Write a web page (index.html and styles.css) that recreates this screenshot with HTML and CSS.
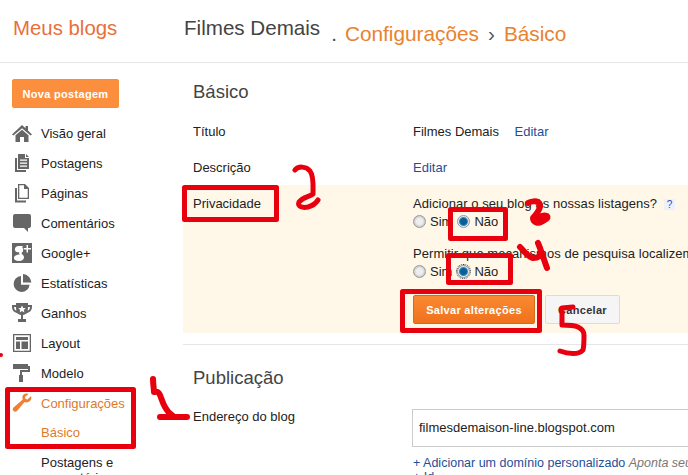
FILE: index.html
```html
<!DOCTYPE html>
<html lang="pt">
<head>
  <meta charset="UTF-8">
  <title>Filmes Demais - Configurações</title>
  <link rel="stylesheet" href="styles.css">
</head>
<body>
  <div class="page">
    <header class="top-bar">
      <div class="brand">Meus blogs</div>
      <div class="crumbs">
        <span class="blog-name">Filmes Demais</span>
        <span class="dot">.</span>
        <span class="crumb">Configurações</span>
        <span class="sep">›</span>
        <span class="crumb">Básico</span>
      </div>
    </header>

    <div class="columns">
      <nav class="sidebar">
        <button class="new-post">Nova postagem</button>
        <ul class="nav">
          <li><svg class="ico" viewBox="0 0 20 20"><path d="M10 2 L13.5 5.2 V3 H16 V7.6 L20 11.4 L18.6 12.6 L10 5.2 L1.4 12.6 L0 11.4 Z M3.5 12.2 L10 6.8 L16.5 12.2 V19 H12 V14 H8 V19 H3.5 Z"/></svg>Visão geral</li>
          <li><svg class="ico" viewBox="0 0 20 20"><path d="M6 1 H13 V5 H17 V16 H6 Z M14 1 L17 4 H14 Z M3 5 H5 V17 H14 V19 H3 Z" fill-rule="evenodd"/><path class="cut" d="M8 6.5 H15 V7.8 H8 Z M8 9.5 H15 V10.8 H8 Z M8 12.5 H15 V13.8 H8 Z"/></svg>Postagens</li>
          <li><svg class="ico" viewBox="0 0 20 20"><path d="M6 1 H13 L17 5 V16 H6 Z M7.3 2.3 V14.7 H15.7 V6 H12 V2.3 Z" fill-rule="evenodd"/><path d="M3 5 H5 V17.6 H14 V19.5 H3 Z"/></svg>Páginas</li>
          <li><svg class="ico" viewBox="0 0 20 20"><path d="M3 1 H17 Q19 1 19 3 V13 Q19 15 17 15 H16 V19 L12 15 H3 Q1 15 1 13 V3 Q1 1 3 1 Z"/></svg>Comentários</li>
          <li><svg class="ico" viewBox="0 0 20 20"><path d="M0 0 H20 V20 H0 Z M7 3 C3.5 3 2.5 5.5 3 7.2 C3.6 9.2 6 9.6 7.2 9 L7 10.5 L8 11.6 C5 11.6 2 12.8 2 15 C2 17.2 5 18 7 18 C10 18 12 16.2 12 14.2 C12 12 9.5 11.6 9.5 10 C11 9 11.5 7.5 11 5.8 C10.8 4.8 10.4 4.4 10 4 L11.4 3 Z M14.5 2 V5 H11.8 V6.5 H14.5 V9.5 H16 V6.5 H19 V5 H16 V2 Z" fill-rule="evenodd"/></svg>Google+</li>
          <li><svg class="ico" viewBox="0 0 20 20"><path d="M9 3 A8 8 0 1 0 17.6 11.8 H9 Z M11 1 V9.6 H19.4 A9 9 0 0 0 11 1 Z"/></svg>Estatísticas</li>
          <li><svg class="ico" viewBox="0 0 20 20"><path d="M4 0 H16 V2 H20 V4 C20 7.5 17.5 9.5 15 10 C14 11.2 12.4 11.8 11 12 V16 H14 V19 H6 V16 H9 V12 C7.6 11.8 6 11.2 5 10 C2.5 9.5 0 7.5 0 4 V2 H4 Z M2 4 C2 6 3 7.2 4.4 7.8 C4.1 6.6 4 5.3 4 4 Z M18 4 H16 C16 5.3 15.9 6.6 15.6 7.8 C17 7.2 18 6 18 4 Z M10 2.5 L8.8 5 L6.2 5.2 L8.2 7 L7.6 9.4 L10 8.1 L12.4 9.4 L11.8 7 L13.8 5.2 L11.2 5 Z" fill-rule="evenodd"/></svg>Ganhos</li>
          <li><svg class="ico" viewBox="0 0 20 20"><path d="M1 1 H19 V19 H1 Z M2.3 2.3 V17.7 H17.7 V2.3 Z M4 4 H16 V7 H4 Z M4 8.5 H8 V16 H4 Z M9.5 8.5 H16 V16 H9.5 Z" fill-rule="evenodd"/></svg>Layout</li>
          <li><svg class="ico" viewBox="0 0 20 20"><path d="M1 1 H16 V3 H18 V9 H10 V12 H11 V19 H7 V12 H8 V7 H16 V6 H1 Z"/></svg>Modelo</li>
          <li class="active"><svg class="ico" viewBox="0 0 20 20"><path d="M19 3 L15.5 6.5 L13.5 6 L13 4 L16.5 1 C14 0 11 1 10.5 3.5 C10.2 5 10.5 5.8 10.8 6.5 L1.5 14.5 C0.5 15.5 0.5 17 1.5 18 C2.5 19 4 18.8 5 18 L12.6 9 C13.6 9.5 15 9.6 16.5 9 C18.8 8 20 5.5 19 3 Z"/></svg>Configurações</li>
          <li class="active sub">Básico</li>
          <li class="sub wrap">Postagens e comentários</li>
        </ul>
      </nav>

      <main class="content">
        <h2>Básico</h2>
        <div class="row row-title">
          <div class="label">Título</div>
          <div class="value">Filmes Demais <a class="link edit">Editar</a></div>
        </div>
        <div class="row row-desc">
          <div class="label">Descrição</div>
          <div class="value"><a class="link">Editar</a></div>
        </div>
        <div class="row editing">
          <div class="label">Privacidade</div>
          <div class="value">
            <div class="question">Adicionar o seu blog às nossas listagens? <span class="help">?</span></div>
            <div class="radios">
              <span class="radio"></span><span>Sim</span>
              <span class="radio on"></span><span>Não</span>
            </div>
            <div class="question second">Permitir que mecanismos de pesquisa localizem</div>
            <div class="radios">
              <span class="radio"></span><span>Sim</span>
              <span class="radio on focus"></span><span>Não</span>
            </div>
            <div class="actions">
              <button class="save">Salvar alterações</button>
              <button class="cancel">Cancelar</button>
            </div>
          </div>
        </div>
        <h2 class="section">Publicação</h2>
        <div class="row">
          <div class="label">Endereço do blog</div>
          <div class="value">
            <div class="address">filmesdemaison-line.blogspot.com</div>
            <div class="domain"><a class="link">+ Adicionar um domínio personalizado</a> <em>Aponta seu blog para</em></div>
            <div class="domain more"><a class="link">+ Id</a></div>
          </div>
        </div>
      </main>
    </div>
  </div>

  <!-- marcas em vermelho desenhadas por cima da captura -->
  <svg class="marks" viewBox="0 0 688 475">
    <rect x="184.5" y="187.5" width="92" height="32"/>
    <rect x="450.5" y="209.5" width="55" height="29"/>
    <rect x="448.5" y="255.5" width="62" height="27"/>
    <rect x="402.5" y="291.5" width="137" height="39"/>
    <rect x="7.5" y="389.5" width="126" height="57"/>
    <path d="M295 170 C298 166 306 166 310 171 C314 176 313 186 313 194 C309 197 303 197 299 202 C297 207 303 208 308 207 C312 206 316 203 318 200"/>
    <path class="heavy" d="M528 203 C531 201 536 201 538 202 C542 205 540 210 533 218 C533 222 538 224 541 222 C545 220 549 218 547 216 C544 215 540 216 538 218"/>
    <path class="heavy" d="M520 247 C524 251 528 257 533 258 C538 258 542 256 541 251 C540 247 539 245 538 243 C541 250 544 260 547 268"/>
    <path d="M573 307 L562 308 C562 314 562 320 562 325 C568 325 574 325 578 327 C582 329 584 331 584 335 C584 341 584 346 583 350 C579 355 568 354 560 351"/>
    <path class="heavy" d="M153 379 C153 384 154 389 154 392 M155 392 C158 391 159 393 160 395 C162 400 163 404 165 407 C167 411 170 414 173 416 M160 417 H187"/>
    <circle cx="1" cy="355" r="2"/>
  </svg>
</body>
</html>
```

FILE: styles.css
```css
* {
  box-sizing: border-box;
}

html, body {
  margin: 0;
  padding: 0;
  height: 100%;
  overflow: hidden;
}

body {
  position: relative;
  background: #fff;
  font-family: "Liberation Sans", Arial, sans-serif;
  font-size: 13px;
  color: #222;
}

.page {
  height: 475px;
  overflow: hidden;
}

.top-bar {
  display: flex;
  height: 63px;
  border-bottom: 1px solid #e6e6e6;
}

.brand {
  width: 184px;
  padding: 17px 0 0 13px;
  font-size: 20.4px;
  color: #e8703a;
}

.crumbs {
  display: flex;
  align-items: flex-start;
  padding-top: 16px;
  font-size: 20.6px;
  white-space: nowrap;
}

.blog-name {
  color: #444;
}

.dot {
  margin: 6px 8px 0 11px;
  color: #444;
}

.crumb {
  margin-top: 6px;
  font-size: 20.8px;
  color: #e8822f;
}

.sep {
  margin: 6px 9px 0;
  color: #555;
}

.columns {
  display: flex;
}

.sidebar {
  width: 183px;
  flex-shrink: 0;
  padding: 16px 0 0 12px;
}

.new-post {
  display: block;
  width: 107px;
  height: 29px;
  border: 1px solid #f58f3a;
  border-radius: 2px;
  background: #fb8f3d;
  color: #fff;
  font: bold 11px "Liberation Sans", Arial, sans-serif;
  letter-spacing: 0.3px;
}

.nav {
  list-style: none;
  margin: 10px 0 0;
  padding: 0;
}

.nav li {
  display: flex;
  align-items: center;
  height: 30px;
  color: #222;
}

.nav li.active {
  color: #dd7a2b;
}

.nav li.active .ico {
  fill: #ee8033;
}

.nav li.sub {
  padding-left: 29px;
}

.nav li.active.sub {
  height: 29px;
}

.nav li.wrap {
  display: block;
  height: auto;
  padding-top: 8px;
  line-height: 15px;
  width: 130px;
}

.ico {
  width: 20px;
  height: 20px;
  margin-right: 9px;
  flex-shrink: 0;
  fill: #666;
}

.ico .cut {
  fill: #fff;
}

.content {
  flex: 1;
  min-width: 0;
}

h2 {
  margin: 0;
  padding: 18px 0 0 10px;
  font-size: 18.5px;
  font-weight: normal;
  color: #444;
  height: 60px;
}

.row {
  display: flex;
  padding-left: 10px;
}

.row-title {
  height: 36px;
  padding-top: 1px;
}

.row-desc {
  height: 26px;
  padding-top: 1px;
}

.label {
  width: 220px;
  flex-shrink: 0;
}

.value {
  white-space: nowrap;
}

.link {
  color: #1f4e99;
}

.edit {
  margin-left: 12px;
}

.editing {
  height: 148px;
  padding-top: 11px;
  background: #fff8e8;
}

.radios {
  display: flex;
  align-items: center;
  gap: 4px;
  height: 20px;
}

.radio {
  width: 13px;
  height: 13px;
  border-radius: 50%;
  border: 1px solid #999;
  background: radial-gradient(circle, #eee 0 3px, #c4c4c4 6px);
}

.radio.on {
  margin-left: 1px;
  border-color: #8a9aa8;
  background: radial-gradient(circle, #0b5f96 0 3px, #3d8ab8 4px, #dfe8ee 5px);
}

.radio.focus {
  outline: 1px dotted #333;
}

.question {
  letter-spacing: 0.05px;
}

.question.second {
  margin-top: 15px;
}

.help {
  margin-left: 3px;
  padding: 0 3px;
  background: #eef0fb;
  color: #2a4fb0;
  font-size: 10px;
}

.actions {
  display: flex;
  gap: 10px;
  margin-top: 14px;
}

.actions button {
  height: 29px;
  border-radius: 2px;
  font: bold 11px "Liberation Sans", Arial, sans-serif;
  letter-spacing: 0.3px;
}

.save {
  width: 122px;
  border: 1px solid #d9691c;
  background: linear-gradient(#f98a32, #f0711c);
  color: #fff;
}

.cancel {
  width: 75px;
  border: 1px solid #dcdcdc;
  background: #f5f5f5;
  color: #333;
}

h2.section {
  height: 65px;
  margin-top: 11px;
  padding-top: 22px;
  border-top: 1px solid #e6e6e6;
}

.row .address {
  width: 300px;
  height: 38px;
  margin-left: -1px;
  padding: 10px 6px;
  border: 1px solid #ccc;
  font-size: 13px;
}

.domain {
  margin-top: 9px;
  font-size: 12.5px;
}

.domain.more {
  margin-top: 0;
}

.domain em {
  color: #777;
}

.marks {
  position: absolute;
  left: 0;
  top: 0;
  width: 688px;
  height: 475px;
  pointer-events: none;
}

.marks rect,
.marks path {
  fill: none;
  stroke: #e8000f;
  stroke-width: 5;
  stroke-linecap: round;
  stroke-linejoin: round;
}

.marks path.heavy {
  stroke-width: 6;
}

.marks circle {
  fill: #e8000f;
}
```
